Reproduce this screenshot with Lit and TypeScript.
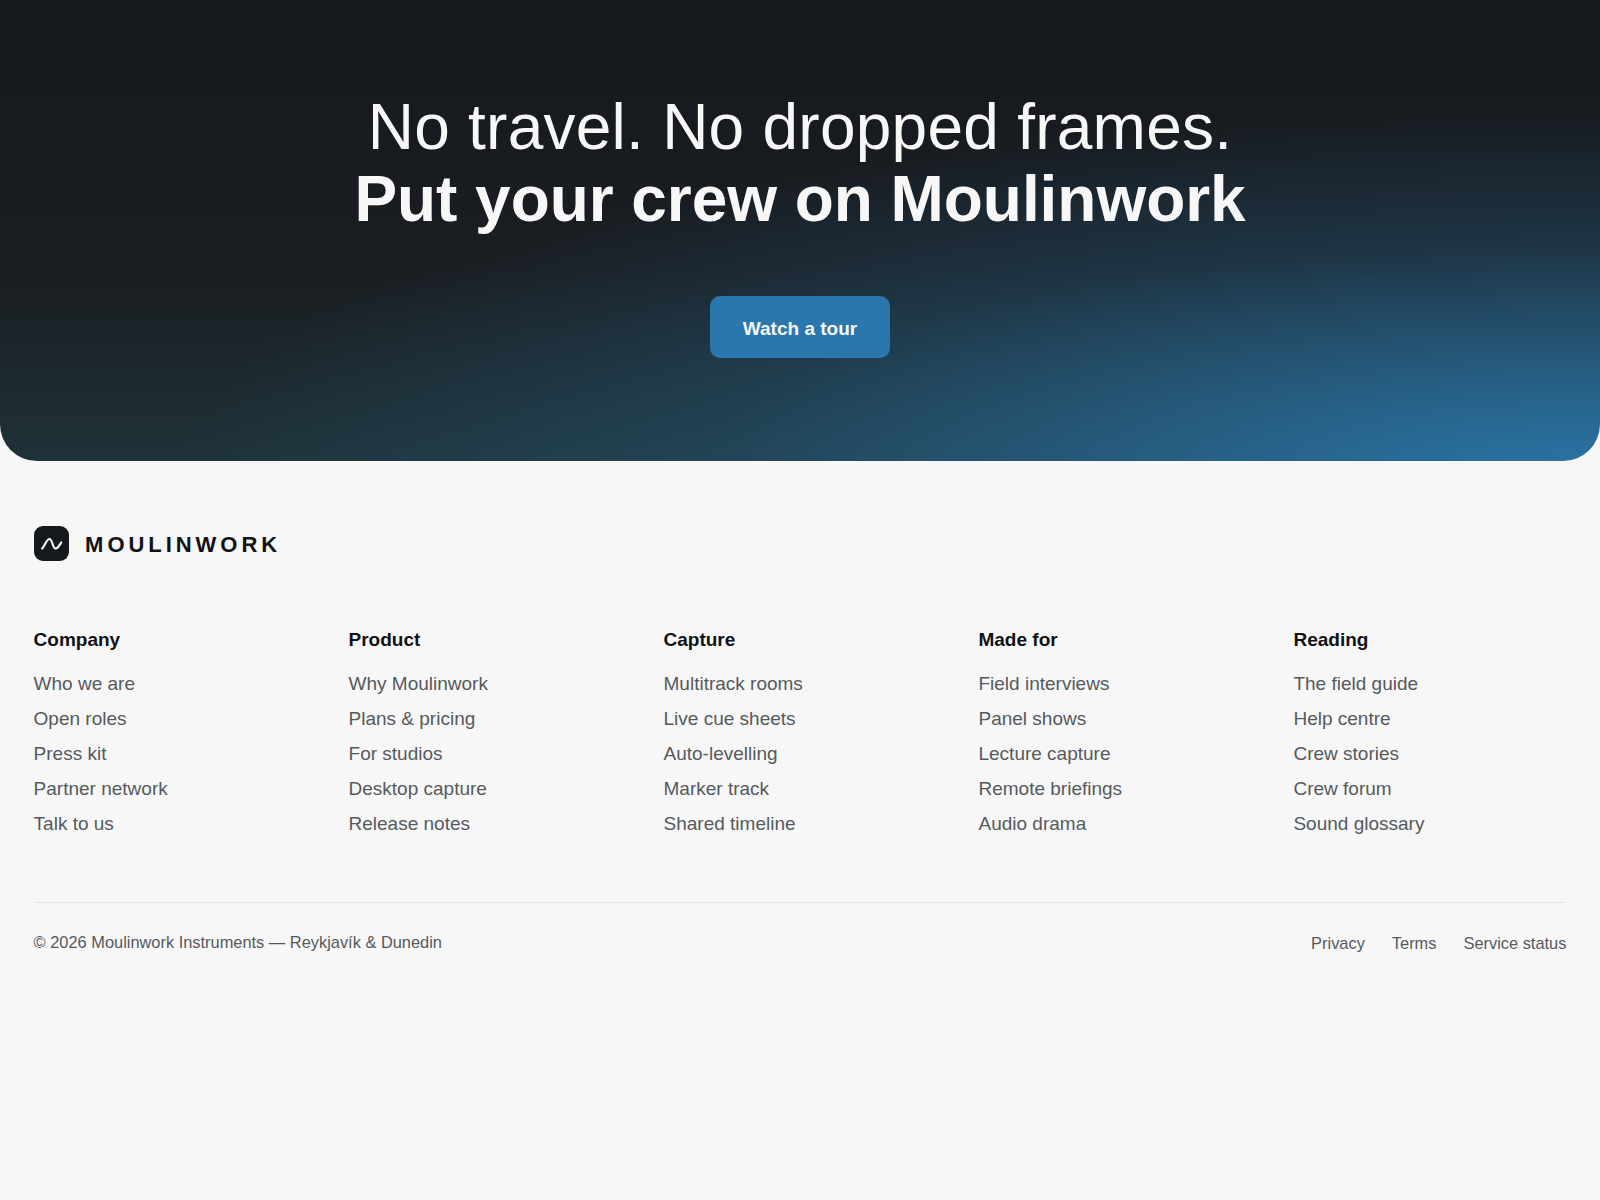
import { LitElement, html, css } from "lit";
import { customElement } from "lit/decorators.js";

const cols: [string, string[]][] = [
  ["Company", ["Who we are", "Open roles", "Press kit", "Partner network", "Talk to us"]],
  ["Product", ["Why Moulinwork", "Plans & pricing", "For studios", "Desktop capture", "Release notes"]],
  ["Capture", ["Multitrack rooms", "Live cue sheets", "Auto-levelling", "Marker track", "Shared timeline"]],
  ["Made for", ["Field interviews", "Panel shows", "Lecture capture", "Remote briefings", "Audio drama"]],
  ["Reading", ["The field guide", "Help centre", "Crew stories", "Crew forum", "Sound glossary"]],
];

@customElement("app-root")
export class AppRoot extends LitElement {
  static styles = css`
    :host { display: block; min-height: 1200px; background: #f7f7f7; font-family: "Liberation Sans", Arial, sans-serif; color: #101214; }
    a { color: inherit; text-decoration: none; }
    .hero { height: 461px; box-sizing: border-box; padding-top: 91px; border-radius: 0 0 37px 37px; text-align: center;
      background:
        radial-gradient(1400px 370px at 98% 103%, rgba(42,116,166,1) 0%, rgba(42,116,166,0.66) 30%, rgba(42,116,166,0.27) 62%, rgba(42,116,166,0) 100%),
        linear-gradient(180deg, #15181c 0%, #1a1d21 58%, #1f3238 100%); }
    h1 { margin: 0; font-size: 64px; line-height: 72px; font-weight: 400; color: #f7f7f8; letter-spacing: 0.25px; }
    h1 b { display: block; font-weight: 700; letter-spacing: -0.05px; }
    .btn { display: inline-block; margin-top: 61px; width: 180px; height: 62px; line-height: 66px; border-radius: 10px; background: #2a77ad; color: #f7f7f8; font-weight: 700; font-size: 19px; }
    footer { padding: 65px 33.6px 0; }
    .brand { display: flex; align-items: center; gap: 16.500px; font-size: 22px; font-weight: 700; letter-spacing: 3.96px; }
    .wordmark { padding-top: 3px; line-height: 32px; }
    .logo { width: 35px; height: 35px; border-radius: 9px; background: #15181c; display: block; }
    .logo svg { display: block; }
    .cols { display: grid; grid-template-columns: repeat(5, 1fr); column-gap: 42px; margin-top: 66px; }
    h2 { margin: 0 0 18px; font-size: 19px; line-height: 26px; font-weight: 700; }
    ul { list-style: none; margin: 0; padding: 0; display: flex; flex-direction: column; gap: 9px; font-size: 19px; line-height: 26px; color: #555a5e; }
    .bar { margin-top: 65px; border-top: 1px solid #e2e4e5; padding-top: 28px; display: flex; justify-content: space-between; font-size: 16.4px; line-height: 22px; color: #555a5e; }
    .legal { display: flex; gap: 27px; padding-top: 1px; }
  `;
  render() {
    return html`
      <section class="hero">
        <h1>No travel. No dropped frames.<b>Put your crew on Moulinwork</b></h1>
        <a class="btn" href="#">Watch a tour</a>
      </section>
      <footer>
        <div class="brand">
          <span class="logo"><svg width="35" height="35" viewBox="0 0 35 35" fill="none" stroke="#f7f7f8" stroke-width="2.200" stroke-linecap="round" stroke-linejoin="round"><path d="M8.200 22.500C11 19.500 12.500 13 15.500 13S18.500 22.500 21.500 22.500C24 22.500 25.500 19 27.200 16.500"/></svg></span>
          <span class="wordmark">MOULINWORK</span>
        </div>
        <div class="cols">
          ${cols.map(([t, ls]) => html`<div><h2>${t}</h2><ul>${ls.map((l) => html`<li><a href="#">${l}</a></li>`)}</ul></div>`)}
        </div>
        <div class="bar">
          <span>© 2026 Moulinwork Instruments — Reykjavík & Dunedin</span>
          <span class="legal"><a href="#">Privacy</a><a href="#">Terms</a><a href="#">Service status</a></span>
        </div>
      </footer>
    `;
  }
}
